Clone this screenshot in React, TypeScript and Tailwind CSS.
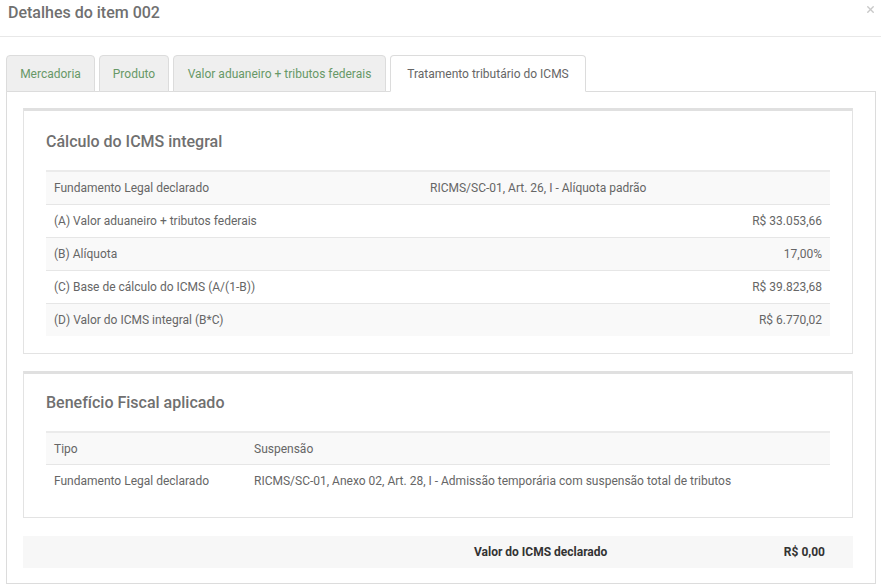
import { X } from "lucide-react";

const tabs = [
  { label: "Mercadoria", w: "w-[89px]" },
  { label: "Produto", w: "w-[70px]" },
  { label: "Valor aduaneiro + tributos federais", w: "w-[213px]" },
];

const calcRows = [
  { label: "(A) Valor aduaneiro + tributos federais", value: "R$ 33.053,66" },
  { label: "(B) Alíquota", value: "17,00%" },
  { label: "(C) Base de cálculo do ICMS (A/(1-B))", value: "R$ 39.823,68" },
  { label: "(D) Valor do ICMS integral (B*C)", value: "R$ 6.770,02" },
];

function Card({
  title,
  className,
  children,
}: {
  title: string;
  className?: string;
  children: React.ReactNode;
}) {
  return (
    <div
      className={
        "border border-[#e3e3e3] border-t-[3px] border-t-[#e0e0e0] bg-white px-[22px] " +
        (className ?? "")
      }
    >
      <h2 className="text-[16px] leading-[22px] font-medium text-[#707070]">
        {title}
      </h2>
      {children}
    </div>
  );
}

export default function App() {
  return (
    <div
      className="w-full bg-white text-[12px] text-[#666]"
      style={{ fontFamily: "Roboto, 'Liberation Sans', sans-serif" }}
    >
      <div className="relative h-[37px] border-b border-[#e8e8e8] px-2 pt-[3px]">
        <h1 className="text-[16px] leading-[20px] font-medium text-[#707070]">
          Detalhes do item 002
        </h1>
        <X
          className="absolute right-[5px] top-[4px] text-[#c8c8c8]"
          size={11}
          strokeWidth={3}
        />
      </div>

      <div className="ml-[6px] mr-[5px] mt-[18px]">
        <div className="flex gap-[4px] border-b border-[#dcdcdc]">
          {tabs.map((t) => (
            <div
              key={t.label}
              className={
                "-mb-px flex h-[37px] items-center justify-center rounded-t-[4px] border border-[#dcdcdc] bg-[#efefef] text-[#679867] " +
                t.w
              }
            >
              {t.label}
            </div>
          ))}
          <div className="-mb-px flex h-[37px] w-[196px] items-center justify-center rounded-t-[4px] border border-[#dcdcdc] border-b-white bg-white text-[#666]">
            Tratamento tributário do ICMS
          </div>
        </div>

        <div className="border-x border-b border-[#dcdcdc] pl-[16px] pr-[22px] pt-[16px] pb-[15px]">
          <Card title="Cálculo do ICMS integral" className="pt-[20px] pb-[17px]">
            <div className="mt-[17px]">
              <div className="flex h-[34px] items-center border-t-2 border-[#ebebeb] bg-[#f9f9f9]">
                <div className="w-[376px] px-2">Fundamento Legal declarado</div>
                <div className="px-2">RICMS/SC-01, Art. 26, I - Alíquota padrão</div>
              </div>
              {calcRows.map((r, i) => (
                <div
                  key={r.label}
                  className={
                    "flex h-[33px] items-center justify-between border-t border-[#e6e6e6] px-2 " +
                    (i % 2 === 1 ? "bg-[#f9f9f9]" : "bg-white")
                  }
                >
                  <span>{r.label}</span>
                  <span>{r.value}</span>
                </div>
              ))}
            </div>
          </Card>

          <Card
            title="Benefício Fiscal aplicado"
            className="mt-[17px] pt-[18px] pb-[20px]"
          >
            <div className="mt-[17px]">
              <div className="flex h-[33px] items-center border-t-2 border-[#ebebeb] bg-[#f9f9f9]">
                <div className="w-[200px] px-2">Tipo</div>
                <div className="px-2">Suspensão</div>
              </div>
              <div className="flex h-[33px] items-center border-t border-[#e6e6e6] bg-white">
                <div className="w-[200px] px-2">Fundamento Legal declarado</div>
                <div className="px-2">
                  RICMS/SC-01, Anexo 02, Art. 28, I - Admissão temporária com
                  suspensão total de tributos
                </div>
              </div>
            </div>
          </Card>

          <div className="mt-[18px] flex h-[32px] items-center bg-[#f7f7f7] font-bold text-[#333]">
            <span className="ml-[451px]">Valor do ICMS declarado</span>
            <span className="ml-auto pr-[28px]">R$ 0,00</span>
          </div>
        </div>
      </div>
    </div>
  );
}
